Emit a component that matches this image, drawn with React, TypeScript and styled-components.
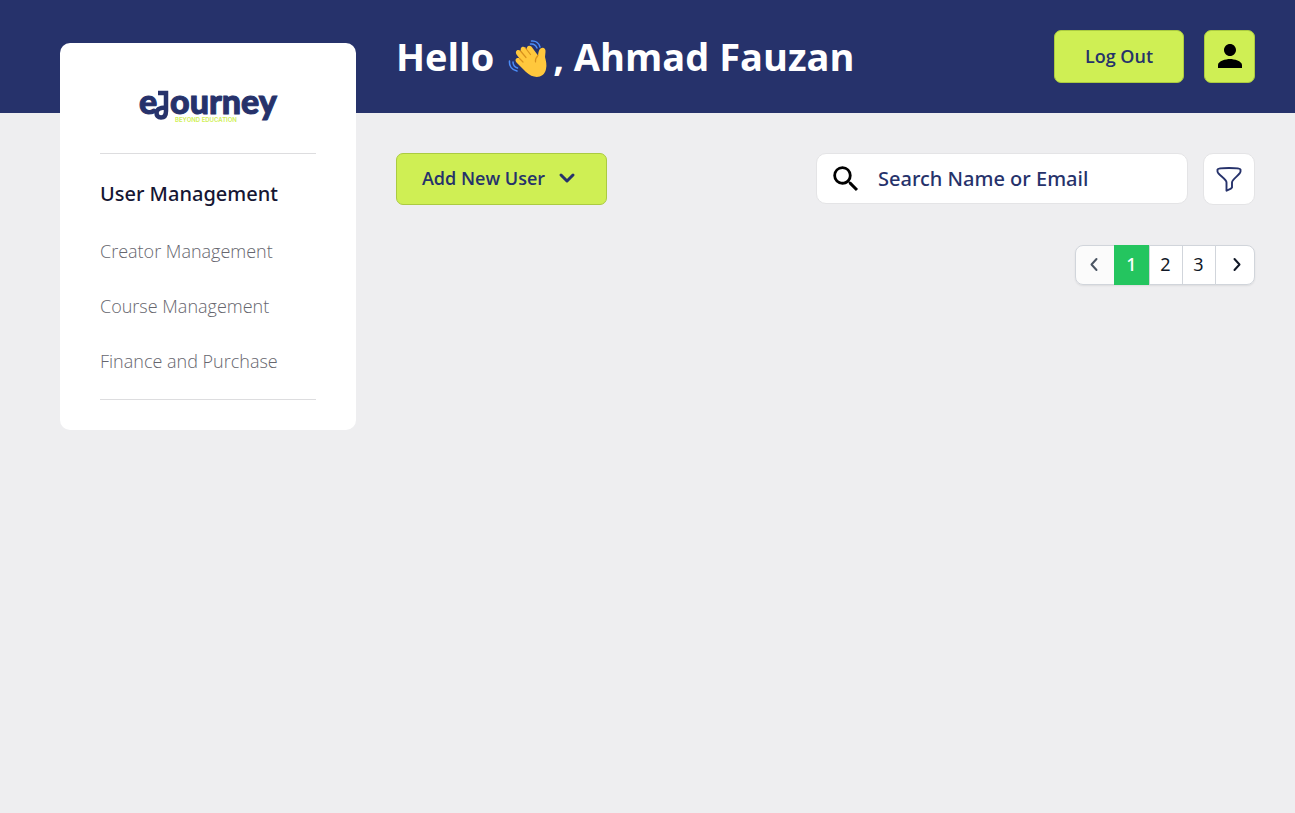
import React from "react";
import styled, { createGlobalStyle } from "styled-components";
import { MdPerson, MdSearch } from "react-icons/md";

const GlobalStyle = createGlobalStyle`
  *, *::before, *::after { box-sizing: border-box; }
  body {
    margin: 0;
    min-height: 100vh;
    background: #eeeef0;
    font-family: "Open Sans", "Noto Sans", sans-serif;
    color: #26326b;
  }
  button, input { font: inherit; color: inherit; }
  button { cursor: pointer; }
`;

const Header = styled.header`
  display: flex;
  align-items: center;
  gap: 20px;
  height: 113px;
  padding: 0 40px 0 396px;
  background: #26326b;
`;

const Greeting = styled.h1`
  flex: 1;
  margin: 0;
  padding-bottom: 2px;
  font-size: 38px;
  line-height: 52px;
  font-weight: 700;
  color: #ffffff;
`;

const LimeButton = styled.button<{ $width: number }>`
  display: flex;
  align-items: center;
  justify-content: center;
  gap: 12px;
  width: ${(p) => p.$width}px;
  height: 52px;
  padding: 0 4px 2px 0;
  border: 1px solid #abcb41;
  border-radius: 7px;
  background: #cfef54;
  font-size: 18px;
  font-weight: 600;

  ${Header} & {
    height: 53px;
    padding: 0 0 2px;
  }
`;

const Body = styled.div`
  display: flex;
  align-items: flex-start;
  gap: 40px;
  padding: 0 40px 0 60px;
`;

const Sidebar = styled.aside`
  flex: 0 0 296px;
  margin-top: -70px;
  padding: 30px 40px;
  border-radius: 10px;
  background: #ffffff;
`;

const LogoLink = styled.a`
  display: flex;
  justify-content: center;
  height: 80px;
  text-decoration: none;
`;

const Nav = styled.nav`
  border: solid #dddddf;
  border-width: 1px 0;
`;

const NavList = styled.ul`
  margin: 0;
  padding: 10px 0;
  list-style: none;
`;

const NavItem = styled.li<{ $active?: boolean }>`
  height: ${(p) => (p.$active ? 60 : 55)}px;
  line-height: ${(p) => (p.$active ? 60 : 55)}px;
`;

const NavLink = styled.a<{ $active?: boolean }>`
  font-family: ${(p) => (p.$active ? '"Noto Sans"' : '"Open Sans"')}, sans-serif;
  font-size: ${(p) => (p.$active ? 20 : 18)}px;
  font-weight: ${(p) => (p.$active ? 500 : 300)};
  color: ${(p) => (p.$active ? "#161633" : "#66666e")};
  text-decoration: none;
  white-space: nowrap;
`;

const Main = styled.main`
  flex: 1;
  min-width: 0;
  padding-top: 40px;
`;

const Toolbar = styled.div`
  display: flex;
  align-items: flex-start;
  gap: 15px;
`;

const SearchBox = styled.label`
  display: flex;
  align-items: center;
  gap: 15px;
  width: 372px;
  height: 51px;
  margin-left: auto;
  padding: 0 12px;
  border: 1px solid #e4e4e6;
  border-radius: 10px;
  background: #ffffff;
  color: #000000;
`;

const SearchInput = styled.input`
  flex: 1;
  min-width: 0;
  padding: 0;
  border: 0;
  outline: 0;
  background: transparent;
  font-family: "Noto Sans", sans-serif;
  font-size: 20px;
  font-weight: 500;
  color: #26326b;
  &::placeholder { color: #26326b; opacity: 1; }
`;

const FilterButton = styled.button`
  display: flex;
  align-items: center;
  justify-content: center;
  width: 52px;
  height: 52px;
  padding: 0;
  border: 1px solid #e4e4e6;
  border-radius: 10px;
  background: #ffffff;
`;

const Pagination = styled.nav`
  display: flex;
  width: fit-content;
  height: 40px;
  margin: 40px 0 0 auto;
  border-radius: 8px;
  box-shadow: 0 1px 2px rgba(0, 0, 0, 0.08);
`;

const PageButton = styled.button<{ $current?: boolean; $edge?: "start" | "end" }>`
  display: flex;
  align-items: center;
  justify-content: center;
  width: ${(p) => (p.$edge ? 40 : p.$current ? 36 : 34)}px;
  margin-left: ${(p) => (p.$edge === "start" ? 0 : -1)}px;
  padding: 0 1px 2px 0;
  border: 1px solid ${(p) => (p.$current ? "#24c55f" : "#d1d5db")};
  border-radius: ${(p) =>
    p.$edge === "start" ? "8px 0 0 8px" : p.$edge === "end" ? "0 8px 8px 0" : "0"};
  background: ${(p) => (p.$current ? "#24c55f" : "#ffffff")};
  color: ${(p) => (p.$current ? "#ffffff" : "#111827")};
  font-family: "Noto Sans", sans-serif;
  font-size: 18px;
  font-weight: ${(p) => (p.$current ? 500 : 400)};
  &:disabled { background: #fbfbfb; color: #4b5563; }
`;

const Wave = styled.svg`
  width: 47px;
  height: 44px;
  margin-left: 2px;
  vertical-align: -10px;
`;

const WavingHand = () => (
  <Wave viewBox="0 0 47 44" role="img" aria-label="Waving hand" fill="none" strokeLinecap="round">
    <path
      d="M20 35L10.500 25.500C8 22.500 11 20 13.500 21.500L10.500 17.500C8.500 14 12 11.500 14.500 14L15.500 15C13 10.500 17 8 19.500 11L21 12.500C20 8.500 24.500 7.500 26.500 11L32 18.500C32.500 14.500 33 12.500 34.500 11.500C37.500 9.500 40 12 39.500 15L39 20C40 24 41 28 40 32C38 42 27 42 20 35Z"
      fill="#ffc83d"
    />
    <path d="M13.500 21.500L17 25M14.500 14L20 20.500M19.500 11L24.500 17.500M32 18.500C30 20.500 29 22.500 29.500 25" stroke="#d9921d" strokeWidth="1.200" />
    <path d="M25.500 4C29.500 3.500 33 6 34 10M24.500 7C27.500 6.500 30 8.500 31 11M3.500 24C3 29 6 33 11 34M7 25C7 28 8.500 30 11.500 31" stroke="#4b8df8" strokeWidth="1.500" />
  </Wave>
);

const Logo = () => (
  <svg width="148" height="58" viewBox="0 0 148 58" role="img" aria-label="eJourney, beyond education">
    <g fill="#26326b" stroke="#26326b" strokeWidth="1" fontFamily="Lato, sans-serif" fontWeight="900" fontSize="34">
      <text x="5" y="41">e</text>
      <text x="36" y="41">ourney</text>
    </g>
    <path
      d="M24 20H32V38C32 42.500 30 44.500 27 44.500C24 44.500 22.500 42.500 22.500 40C22.500 36.500 26 34.500 32 34.500"
      fill="none"
      stroke="#26326b"
      strokeWidth="4.500"
    />
    <text x="41" y="49" fill="#cfef54" fontFamily="Inter, sans-serif" fontWeight="600" fontSize="6">
      BEYOND EDUCATION
    </text>
  </svg>
);

const FilterIcon = () => (
  <svg width="28" height="28" viewBox="0 0 28 28" fill="none" stroke="#26326b" strokeWidth="1.900" strokeLinejoin="round" aria-hidden="true">
    <path d="M2.500 4.500C3 2.500 25 2.500 25.500 4.500V6.500C25.500 9.500 17 14 17 17.500V22.500C16 24.200 13.500 24.700 11.500 25.700V17.500C11.500 14 2.500 9.500 2.500 6.500Z" />
  </svg>
);

const Chevron = ({ d, size, weight }: { d: string; size: number; weight: number }) => (
  <svg width={size} height={size} viewBox="0 0 20 20" fill="none" stroke="currentColor" strokeWidth={weight} strokeLinecap="round" strokeLinejoin="round" aria-hidden="true">
    <path d={d} />
  </svg>
);

const sections = ["User Management", "Creator Management", "Course Management", "Finance and Purchase"];

export default function App() {
  return (
    <>
      <GlobalStyle />
      <Header>
        <Greeting>
          Hello <WavingHand />, Ahmad Fauzan
        </Greeting>
        <LimeButton $width={130}>Log Out</LimeButton>
        <LimeButton $width={51} aria-label="Profile">
          <MdPerson size={36} color="#000000" />
        </LimeButton>
      </Header>
      <Body>
        <Sidebar>
          <LogoLink href="#" aria-label="eJourney home">
            <Logo />
          </LogoLink>
          <Nav aria-label="Sections">
            <NavList>
              {sections.map((name, i) => (
                <NavItem key={name} $active={i === 0}>
                  <NavLink href="#" $active={i === 0}>{name}</NavLink>
                </NavItem>
              ))}
            </NavList>
          </Nav>
        </Sidebar>
        <Main>
          <Toolbar>
            <LimeButton $width={211}>
              Add New User
              <Chevron d="M4 7L10 13L16 7" size={20} weight={3} />
            </LimeButton>
            <SearchBox>
              <MdSearch size={34} aria-hidden="true" />
              <SearchInput type="text" placeholder="Search Name or Email" aria-label="Search Name or Email" />
            </SearchBox>
            <FilterButton aria-label="Filter">
              <FilterIcon />
            </FilterButton>
          </Toolbar>
          <Pagination aria-label="Pages">
            <PageButton $edge="start" disabled aria-label="Previous page">
              <Chevron d="M11.500 5L6.500 10.500L11.500 16" size={20} weight={2} />
            </PageButton>
            <PageButton $current aria-current="page">1</PageButton>
            <PageButton>2</PageButton>
            <PageButton>3</PageButton>
            <PageButton $edge="end" aria-label="Next page">
              <Chevron d="M9.500 5L14.500 10.500L9.500 16" size={20} weight={2} />
            </PageButton>
          </Pagination>
        </Main>
      </Body>
    </>
  );
}
